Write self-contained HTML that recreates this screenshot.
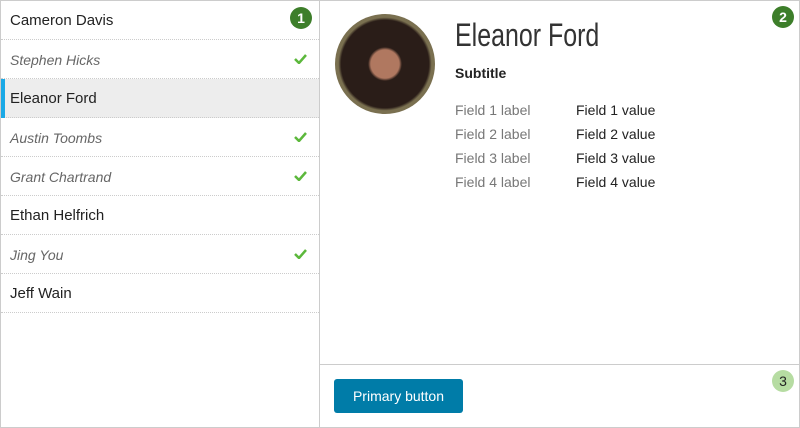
<!DOCTYPE html>
<html><head><style>
body{margin:0;width:800px;height:428px;overflow:hidden;font-family:"Liberation Sans",sans-serif;background:#fff;position:relative}
.frame{position:absolute;left:0;top:0;width:798px;height:426px;border:1px solid #ccc}
.left{position:absolute;left:1px;top:1px;width:318px;height:426px;border-right:1px solid #ccc}
.row{position:relative;height:38px;border-bottom:1px dotted #ccc;font-size:15px;line-height:40px;padding-left:9px;color:#222}
.row.i{font-style:italic;color:#666;font-size:14px}
.row.sel{background:#ededed}
.row.sel:before{content:"";position:absolute;left:0;top:0;width:4px;height:39px;background:#1aa9e6}
.chk{position:absolute;right:12px;top:14px}
.badge{position:absolute;width:22px;height:22px;border-radius:50%;background:#3d7e2a;color:#fff;font-size:14px;font-weight:bold;text-align:center;line-height:22px}
.av{position:absolute;left:335px;top:14px;width:100px;height:100px;border-radius:50%;background:radial-gradient(circle at 50% 50%,#b07860 0 20%,#2a1d18 24% 62%,#7a7050 66%)}
.title{position:absolute;left:455px;top:17px;font-size:32px;font-weight:normal;color:#333;transform:scaleX(0.78);transform-origin:left;white-space:nowrap}
.sub{position:absolute;left:455px;top:65px;font-size:14px;font-weight:bold;color:#222}
.f{position:absolute;left:455px;font-size:14px;color:#777}
.v{position:absolute;left:576px;font-size:14px;color:#222}
.foot{position:absolute;left:320px;top:364px;width:479px;border-top:1px solid #ccc}
.btn{position:absolute;left:334px;top:379px;width:129px;height:34px;background:#007ca8;border-radius:3px;color:#fff;font-size:14px;text-align:center;line-height:35px}
</style></head><body>
<div class="frame"></div>
<div class="left">
<div class="row">Cameron Davis</div>
<div class="row i">Stephen Hicks<svg class="chk" width="13" height="10" viewBox="0 0 13 10"><path d="M1 5l4 4 7-8" stroke="#5cb83c" stroke-width="2.5" fill="none"/></svg></div>
<div class="row sel">Eleanor Ford</div>
<div class="row i">Austin Toombs<svg class="chk" width="13" height="10" viewBox="0 0 13 10"><path d="M1 5l4 4 7-8" stroke="#5cb83c" stroke-width="2.5" fill="none"/></svg></div>
<div class="row i">Grant Chartrand<svg class="chk" width="13" height="10" viewBox="0 0 13 10"><path d="M1 5l4 4 7-8" stroke="#5cb83c" stroke-width="2.5" fill="none"/></svg></div>
<div class="row">Ethan Helfrich</div>
<div class="row i">Jing You<svg class="chk" width="13" height="10" viewBox="0 0 13 10"><path d="M1 5l4 4 7-8" stroke="#5cb83c" stroke-width="2.5" fill="none"/></svg></div>
<div class="row">Jeff Wain</div>
</div>
<div class="badge" style="left:290px;top:7px">1</div>
<div class="badge" style="left:772px;top:6px">2</div>
<div class="badge" style="left:772px;top:370px;background:#b6dca2;color:#222;font-weight:normal">3</div>
<div class="av"></div>
<div class="title">Eleanor Ford</div>
<div class="sub">Subtitle</div>
<div class="f" style="top:102px">Field 1 label</div><div class="v" style="top:102px">Field 1 value</div>
<div class="f" style="top:126px">Field 2 label</div><div class="v" style="top:126px">Field 2 value</div>
<div class="f" style="top:150px">Field 3 label</div><div class="v" style="top:150px">Field 3 value</div>
<div class="f" style="top:174px">Field 4 label</div><div class="v" style="top:174px">Field 4 value</div>
<div class="foot"></div>
<div class="btn">Primary button</div>
</body></html>
